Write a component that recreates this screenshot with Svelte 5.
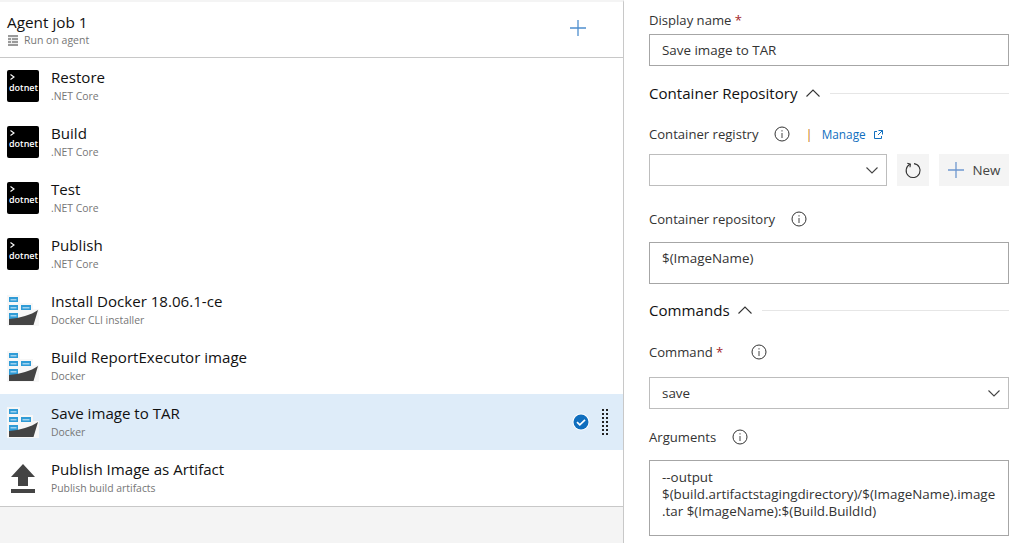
<script lang="ts">
	const tasks = [
		{ name: 'Restore', sub: '.NET Core', icon: 'dotnet' },
		{ name: 'Build', sub: '.NET Core', icon: 'dotnet' },
		{ name: 'Test', sub: '.NET Core', icon: 'dotnet' },
		{ name: 'Publish', sub: '.NET Core', icon: 'dotnet' },
		{ name: 'Install Docker 18.06.1-ce', sub: 'Docker CLI installer', icon: 'docker' },
		{ name: 'Build ReportExecutor image', sub: 'Docker', icon: 'docker' },
		{ name: 'Save image to TAR', sub: 'Docker', icon: 'docker', selected: true },
		{ name: 'Publish Image as Artifact', sub: 'Publish build artifacts', icon: 'upload' }
	];
</script>

{#snippet info()}
	<svg class="info" width="16" height="16" viewBox="0 0 16 16" fill="none" stroke="#333">
		<circle cx="8" cy="8" r="7" />
		<path d="M8 7v5M8 4.200v1.300" stroke="#444" />
	</svg>
{/snippet}

{#snippet chevronUp()}
	<svg width="14" height="8" viewBox="0 0 14 8" fill="none" stroke="#333" stroke-width="1.1">
		<path d="M0.500 7.500L7 1l6.500 6.500" />
	</svg>
{/snippet}

{#snippet chevronDown()}
	<svg width="12" height="7" viewBox="0 0 12 7" fill="none" stroke="#444" stroke-width="1.1">
		<path d="M0.500 0.500L6 6l5.500-5.500" />
	</svg>
{/snippet}

<div class="page">
	<div class="left">
		<div class="job">
			<div class="job-text">
				<div class="job-title">Agent job 1</div>
				<div class="job-sub">
					<svg width="10" height="11" viewBox="0 0 10 11">
						<path d="M0 0h10v11H0z" fill="#9a9a9a" />
						<path d="M0 2.500h10M0 5.500h10M0 8.500h10" stroke="#eee" stroke-width="1" />
						<path d="M3.500 3v2M3.500 6v2" stroke="#eee" stroke-width="1" />
					</svg>
					<span>Run on agent</span>
				</div>
			</div>
			<svg class="plus" width="16" height="16" viewBox="0 0 16 16">
				<path d="M0 8h16M8 0v16" stroke="#4f8fce" stroke-width="1.3" />
			</svg>
		</div>

		<div class="tasks">
			{#each tasks as task}
				<div class="task" class:selected={task.selected}>
					<div class="icon">
						{#if task.icon === 'dotnet'}
							<div class="dotnet">
								<svg width="5" height="6" viewBox="0 0 5 6" fill="none" stroke="#fff" stroke-width="1.1">
									<path d="M0.500 0.500L4 3L0.500 5.500" />
								</svg>
								<span>dotnet</span>
							</div>
						{:else if task.icon === 'docker'}
							<svg width="32" height="32" viewBox="0 0 32 32">
								<path d="M0 1h13v8h13v6h6v17H0z" fill="#f7f7f7" />
								<path d="M2 3h9v5H2zM2 11h9v5H2zM14 11h10v5H14zM2 19h9v6H2z" fill="#2f9bd6" />
								<path d="M3.500 5h6v1.500h-6zM3.500 13h6v1.500h-6zM15.500 13h7v1.500h-7zM3.500 21h6v1.500h-6z" fill="#9fd2ee" />
								<path d="M2 25C13 24 24 21 31 16L26.500 31H2z" fill="#444" />
							</svg>
						{:else}
							<svg width="32" height="32" viewBox="0 0 32 32">
								<path d="M16 2L28 15H21V24H11V15H4z" fill="#444" />
								<path d="M4 27h24v4H4z" fill="#444" />
							</svg>
						{/if}
					</div>
					<div class="task-text">
						<div class="task-name">{task.name}</div>
						<div class="task-sub">{task.sub}</div>
					</div>
					{#if task.selected}
						<div class="task-actions">
							<svg width="18" height="18" viewBox="0 0 18 18">
								<circle cx="9" cy="9" r="8.500" fill="#fff" />
								<circle cx="9" cy="9" r="7.500" fill="#106ebe" />
								<path d="M5 9.200l2.800 2.600L13 6.800" fill="none" stroke="#fff" stroke-width="1.700" />
							</svg>
							<div class="grip"></div>
						</div>
					{/if}
				</div>
			{/each}
		</div>
		<div class="rest"></div>
	</div>

	<div class="right">
		<div class="label first">Display name <span class="req">*</span></div>
		<div class="field">Save image to TAR</div>

		<div class="section">
			<span>Container Repository</span>
			{@render chevronUp()}
			<div class="rule"></div>
		</div>

		<div class="label registry">
			<span>Container registry</span>
			{@render info()}
			<span class="bar">|</span>
			<span class="manage">Manage</span>
			<svg width="9" height="9" viewBox="0 0 9 9" fill="none" stroke="#106ebe">
				<path d="M3 1.500H0.500v7h7V6M4.500 0.500h4v4M8.500 0.500L4 5" />
			</svg>
		</div>
		<div class="registry-row">
			<div class="field select">
				<span></span>
				{@render chevronDown()}
			</div>
			<button class="square" aria-label="Refresh">
				<svg width="17" height="17" viewBox="0 0 17 17" fill="none" stroke="#333" stroke-width="1.1">
					<path d="M5 2.300A7 7 0 1 0 9 1.600" />
					<path d="M2.300 1.200L5.400 2.200L5 5.300" />
				</svg>
			</button>
			<button class="new">
				<svg width="16" height="16" viewBox="0 0 16 16">
					<path d="M0 8h16M8 0v16" stroke="#6f98cf" stroke-width="1.3" />
				</svg>
				<span>New</span>
			</button>
		</div>

		<div class="label repo">
			<span>Container repository</span>
			{@render info()}
		</div>
		<div class="field tall">$(ImageName)</div>

		<div class="section commands">
			<span>Commands</span>
			{@render chevronUp()}
			<div class="rule"></div>
		</div>

		<div class="label command">
			<span>Command <span class="req">*</span></span>
			{@render info()}
		</div>
		<div class="field select">
			<span>save</span>
			{@render chevronDown()}
		</div>

		<div class="label args">
			<span>Arguments</span>
			{@render info()}
		</div>
		<div class="field area">--output<br />$(build.artifactstagingdirectory)/$(ImageName).image<br />.tar $(ImageName):$(Build.BuildId)</div>
	</div>
</div>

<style>
	:global(body) {
		background: #fff;
		overflow: hidden;
	}
	.page {
		display: flex;
		width: 1018px;
		height: 543px;
		font-family: 'Open Sans', 'Noto Sans', sans-serif;
		color: #222;
		overflow: hidden;
	}
	.left {
		width: 623px;
		flex-shrink: 0;
		display: flex;
		flex-direction: column;
		border-right: 1px solid #c8c8c8;
		border-top: 2px solid #f4f4f4;
	}
	.job {
		height: 56px;
		display: flex;
		align-items: center;
		justify-content: space-between;
		padding: 0 37px 0 7px;
		box-sizing: border-box;
		border-bottom: 1px solid #c8c8c8;
	}
	.plus {
		margin-bottom: 4px;
	}
	.job-title {
		font-size: 15.300px;
		line-height: 21px;
		color: #111;
	}
	.job-sub {
		display: flex;
		align-items: center;
		gap: 6px;
		font-size: 10.500px;
		line-height: 14px;
		color: #767676;
	}
	.job-sub svg {
		margin-left: 1px;
	}
	.task {
		height: 56px;
		display: flex;
		align-items: center;
		padding: 0 14px 0 7px;
		box-sizing: border-box;
		gap: 12px;
	}
	.task.selected {
		background: #deecf9;
	}
	.icon {
		width: 32px;
		height: 32px;
		flex-shrink: 0;
	}
	.dotnet {
		width: 32px;
		height: 32px;
		background: #000;
		border-radius: 2px;
		color: #fff;
		display: flex;
		flex-direction: column;
		padding: 4px 0 0 2px;
		box-sizing: border-box;
	}
	.dotnet svg {
		margin-left: 1px;
	}
	.dotnet span {
		font-size: 9px;
		font-weight: 600;
		line-height: 11px;
		margin-top: 2px;
	}
	.task-text {
		flex: 1;
		margin-top: -2px;
	}
	.task-name {
		font-size: 15.100px;
		line-height: 20px;
		color: #111;
	}
	.task-sub {
		font-size: 10.400px;
		line-height: 14px;
		margin-top: 2px;
		color: #767676;
	}
	.task-actions {
		display: flex;
		align-items: center;
		gap: 11px;
	}
	.grip {
		width: 8px;
		height: 28px;
		background: radial-gradient(circle, #222 0 1px, transparent 1.200px) 0 0 / 4px 4px;
	}
	.rest {
		flex: 1;
		background: #f4f4f4;
		border-top: 1px solid #c8c8c8;
	}
	.right {
		flex: 1;
		padding: 0 9px 0 25px;
		display: flex;
		flex-direction: column;
	}
	.label {
		display: flex;
		align-items: center;
		font-size: 13.100px;
		line-height: 18px;
		color: #333;
	}
	.label.first {
		display: block;
		margin-top: 11px;
		margin-bottom: 5px;
	}
	.req {
		color: #a4262c;
	}
	.field {
		border: 1px solid #a6a6a6;
		height: 32px;
		box-sizing: border-box;
		padding: 0 12px;
		display: flex;
		align-items: center;
		font-size: 13.400px;
		color: #333;
		flex-shrink: 0;
	}
	.section {
		display: flex;
		align-items: center;
		font-size: 15.100px;
		line-height: 20px;
		color: #111;
		margin-top: 17px;
	}
	.section svg {
		margin-left: 8px;
	}
	.rule {
		flex: 1;
		height: 1px;
		background: #e6e6e6;
		margin-left: 10px;
	}
	.info {
		margin-left: 16px;
		flex-shrink: 0;
	}
	.bar {
		color: #c97a1a;
		margin-left: 15px;
	}
	.manage {
		color: #106ebe;
		font-size: 11.800px;
		margin-left: 9px;
		margin-right: 8px;
	}
	.label.registry {
		margin-top: 22px;
		margin-bottom: 11px;
	}
	.registry-row {
		display: flex;
		gap: 10px;
	}
	.registry-row .select {
		flex: 1;
	}
	.select {
		justify-content: space-between;
		border-color: #bdbdbd;
		padding-right: 8px;
	}
	.square,
	.new {
		height: 32px;
		border: none;
		background: #f4f4f4;
		padding: 0;
		display: flex;
		align-items: center;
		justify-content: center;
		font-family: inherit;
		font-size: 13.400px;
		color: #444;
	}
	.square {
		width: 32px;
	}
	.new {
		width: 70px;
		gap: 9px;
	}
	.label.repo {
		margin-top: 24px;
		margin-bottom: 14px;
	}
	.tall {
		height: 42px;
		align-items: flex-start;
		padding-top: 6px;
	}
	.commands {
		margin-top: 16px;
	}
	.label.command {
		margin-top: 23px;
		margin-bottom: 16px;
	}
	.label.command .info {
		margin-left: 28px;
	}
	.label.args {
		margin-top: 19px;
		margin-bottom: 14px;
	}
	.area {
		display: block;
		height: 76px;
		padding-top: 8px;
		line-height: 17px;
	}
</style>
